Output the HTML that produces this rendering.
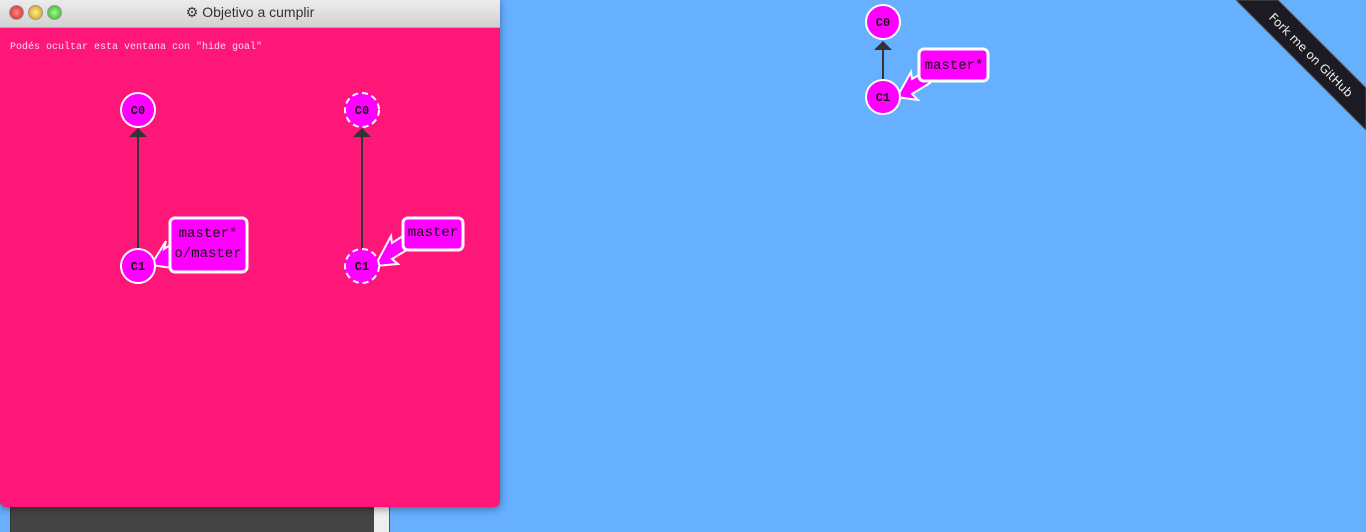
<!DOCTYPE html>
<html><head><meta charset="utf-8"><style>
html,body{margin:0;padding:0;width:1366px;height:532px;overflow:hidden;background:#66b0ff;font-family:"Liberation Sans",sans-serif}
.win{position:absolute;left:0;top:0;width:500px;height:507px;background:#ff1679;border-radius:0 0 6px 6px;box-shadow:0 2px 8px rgba(0,0,0,.4);overflow:hidden}
.bar{height:27px;background:linear-gradient(#ececec,#d2d2d2);border-bottom:1px solid #aaa;position:relative;text-align:center;font-size:14px;line-height:24px;color:#333}
.dot{position:absolute;top:5px;width:13px;height:13px;border-radius:50%;border:1px solid #999}
.hint{position:absolute;left:10px;top:42px;font:10px "Liberation Mono",monospace;color:#fde}
.dark{position:absolute;left:10px;top:507px;width:364px;height:25px;background:#444;border-left:1px solid #333}
.light{position:absolute;left:374px;top:507px;width:15px;height:25px;background:#eee;border-right:1px solid #555}
svg text{font-family:"Liberation Mono",monospace}
</style></head><body>
<div class="dark"></div><div class="light"></div>
<div class="win">
<div class="bar"><span class="dot" style="left:9px;background:radial-gradient(#f88,#c22)"></span><span class="dot" style="left:28px;background:radial-gradient(#fe8,#c90)"></span><span class="dot" style="left:47px;background:radial-gradient(#9f8,#3a2)"></span>⚙ Objetivo a cumplir</div>
<div class="hint">Podés ocultar esta ventana con "hide goal"</div>
</div>
<svg width="1366" height="532" style="position:absolute;left:0;top:0">
<g stroke="#333" stroke-width="2" fill="#333">
<line x1="138" y1="136" x2="138" y2="249"/><polygon points="129,137 147,137 138,128" stroke="none"/>
<line x1="362" y1="136" x2="362" y2="249"/><polygon points="353,137 371,137 362,128" stroke="none"/>
<line x1="883" y1="49" x2="883" y2="80"/><polygon points="874,50 892,50 883,41" stroke="none"/>
</g>
<g fill="#f0f" stroke="#fff" stroke-width="2">
<polygon points="172,244 164,249 166,241 151,265 172,268 171,262"/>
<polygon points="406,234 392,243 391,236 375,266 398,264 392,259 410,248"/>
<polygon points="924,72 912,79 911,72 897,97 918,100 912,94 930,83"/>
<circle cx="138" cy="110" r="17"/><circle cx="138" cy="266" r="17"/>
<circle cx="362" cy="110" r="17" stroke-dasharray="6 4"/><circle cx="362" cy="266" r="17" stroke-dasharray="6 4"/>
<circle cx="883" cy="22" r="17"/><circle cx="883" cy="97" r="17"/>
<rect x="170" y="218" width="77" height="54" rx="5" stroke-width="3"/>
<rect x="403" y="218" width="60" height="32" rx="5" stroke-width="3"/>
<rect x="919" y="49" width="69" height="32" rx="5" stroke-width="3"/>
</g>
<g font-size="12" font-weight="bold" fill="#111" text-anchor="middle">
<text x="138" y="114">C0</text><text x="138" y="270">C1</text>
<text x="362" y="114">C0</text><text x="362" y="270">C1</text>
<text x="883" y="26">C0</text><text x="883" y="101">C1</text>
</g>
<g font-size="14" fill="#111" text-anchor="middle">
<text x="208" y="237">master*</text><text x="208" y="257">o/master</text>
<text x="433" y="236">master</text>
<text x="954" y="69">master*</text>
</g>
<polygon points="1236,0 1278,0 1366,88 1366,130" fill="#1c1b24" stroke="#555" stroke-width="1"/>
<text x="1308" y="58" transform="rotate(45 1308 58)" font-size="12" fill="#eee" text-anchor="middle" style="font-family:'DejaVu Sans',sans-serif">Fork me on GitHub</text>
</svg>
</body></html>
